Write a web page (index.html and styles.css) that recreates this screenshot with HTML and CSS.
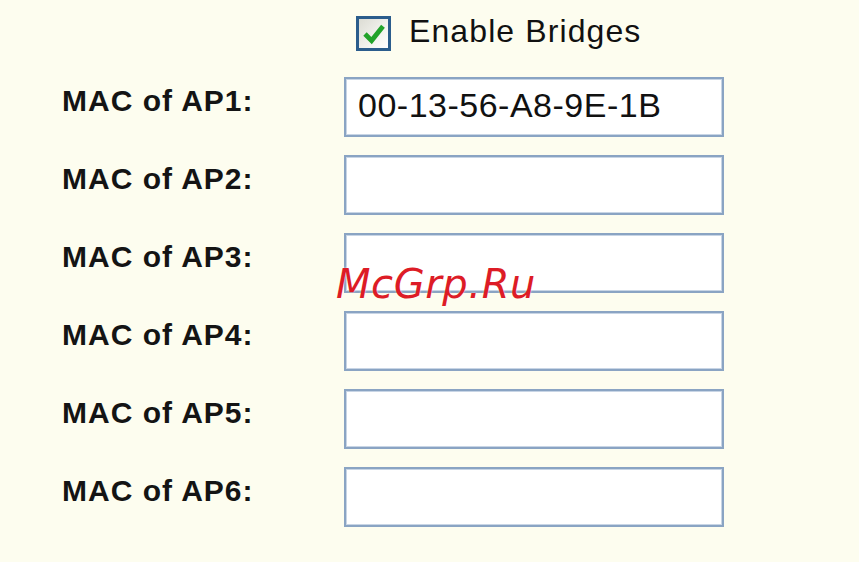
FILE: index.html
```html
<!DOCTYPE html>
<html>
<head>
<meta charset="utf-8">
<link rel="stylesheet" href="styles.css">
</head>
<body>
<div class="page">
  <div class="enable">
    <span class="check">
      <svg class="tick" viewBox="0 0 20 20" width="24" height="24"><path d="M2.5 10 L8 15.5 L17.5 3.5" fill="none" stroke="#22a32a" stroke-width="4" stroke-linejoin="miter"/></svg>
    </span>
    <span class="enable-text">Enable Bridges</span>
  </div>
  <div class="rows">
    <div class="row"><span class="label">MAC of AP1:</span><input class="mac" type="text" value="00-13-56-A8-9E-1B"></div>
    <div class="row"><span class="label">MAC of AP2:</span><input class="mac" type="text" value=""></div>
    <div class="row"><span class="label">MAC of AP3:</span><input class="mac" type="text" value=""></div>
    <div class="row"><span class="label">MAC of AP4:</span><input class="mac" type="text" value=""></div>
    <div class="row"><span class="label">MAC of AP5:</span><input class="mac" type="text" value=""></div>
    <div class="row"><span class="label">MAC of AP6:</span><input class="mac" type="text" value=""></div>
  </div>
  <div class="watermark">McGrp.Ru</div>
</div>
</body>
</html>
```
FILE: styles.css
```css
html, body {
  margin: 0;
  padding: 0;
  background: #fdfdef;
}
.page {
  position: relative;
  width: 859px;
  height: 562px;
  overflow: hidden;
  font-family: "Liberation Sans", Arial, sans-serif;
  color: #111;
}
.enable {
  display: flex;
  align-items: center;
  padding: 16px 0 0 356px;
  height: 35px;
}
.check {
  box-sizing: border-box;
  width: 35px;
  height: 35px;
  border: 3px solid #2b5d8c;
  background: linear-gradient(135deg, #dcdcd4 0%, #f6f6f2 70%, #ffffff 100%);
  display: flex;
  align-items: center;
  justify-content: center;
}
.tick {
  display: block;
  flex: none;
  width: 24px;
  height: 24px;
}
.enable-text {
  margin-left: 18px;
  font-size: 32px;
  letter-spacing: 1.1px;
  line-height: 35px;
  padding-bottom: 4px;
}
.rows {
  display: flex;
  flex-direction: column;
  gap: 18px;
  margin-top: 26px;
}
.row {
  display: flex;
  align-items: flex-start;
  height: 60px;
}
.label {
  width: 282px;
  padding-left: 62px;
  padding-top: 6px;
  font-size: 30px;
  font-weight: bold;
  letter-spacing: 1px;
  line-height: 36px;
  color: #141414;
}
.mac {
  box-sizing: border-box;
  width: 380px;
  height: 60px;
  margin: 0;
  padding: 0 0 3px 12px;
  border: 2px solid #8aa4c3;
  box-shadow: inset 0 0 0 1px #c8d5e5;
  background: #ffffff;
  font-family: "Liberation Sans", Arial, sans-serif;
  font-size: 34px;
  letter-spacing: 0.5px;
  color: #111;
  outline: none;
}
.watermark {
  position: absolute;
  left: 336px;
  top: 261px;
  font-family: "DejaVu Sans", sans-serif;
  font-style: italic;
  font-size: 40px;
  letter-spacing: 0.6px;
  color: #dd1c26;
  text-shadow: 0 0 2px rgba(255,255,255,0.8);
}
```
